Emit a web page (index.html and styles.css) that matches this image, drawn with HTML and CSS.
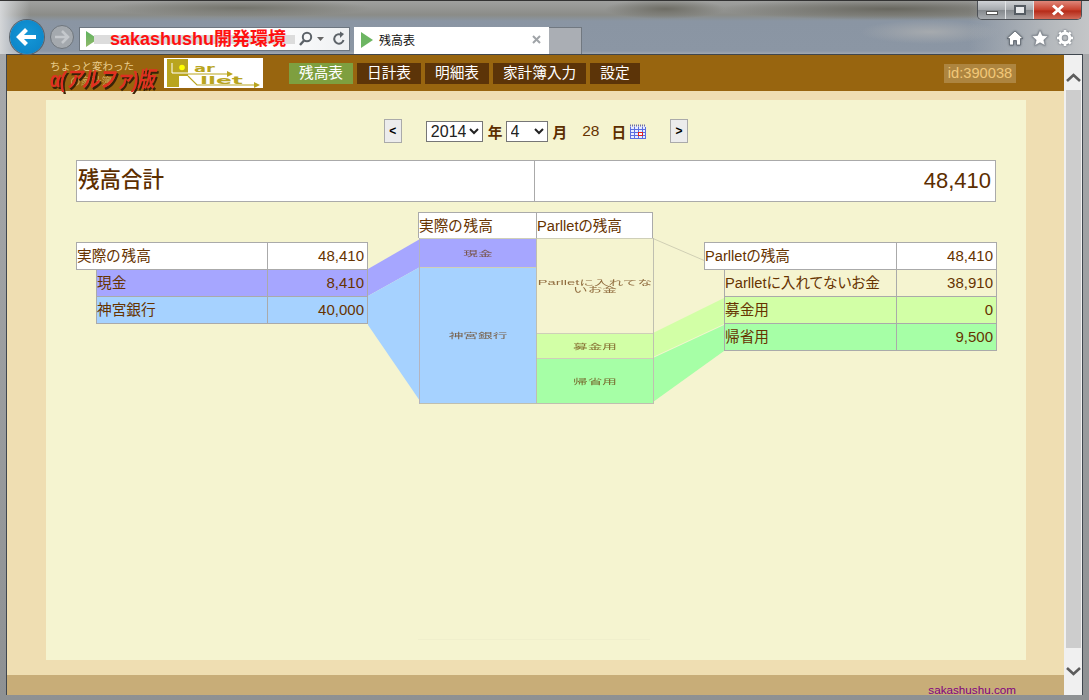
FILE: index.html
```html
<!DOCTYPE html>
<html lang="ja">
<head>
    <meta charset="UTF-8">
    <meta name="viewport" content="width=device-width, initial-scale=1.0">
    <title>残高表</title>
    <link rel="stylesheet" href="styles.css">
</head>
<body>
<div class="window">
    <div class="winbtns">
        <div class="winbtn winbtn-min"><span class="min-bar"></span></div>
        <div class="winbtn winbtn-max"><span class="max-box"></span></div>
        <div class="winbtn winbtn-close">
            <svg width="16" height="12" viewBox="0 0 16 12"><path d="M3 1.500 13 10.500M13 1.500 3 10.500" stroke="#fff" stroke-width="3"/></svg>
        </div>
    </div>

    <div class="chrome">
        <div class="back">
            <svg width="34" height="34" viewBox="0 0 34 34"><path d="M26 17H10M16.500 9.500 9 17l7.500 7.500" fill="none" stroke="#fff" stroke-width="4.200"/></svg>
        </div>
        <div class="forward">
            <svg width="22" height="22" viewBox="0 0 22 22"><path d="M4 11h13M11 5l6 6-6 6" fill="none" stroke="#c4c8cc" stroke-width="2.600"/></svg>
        </div>
        <div class="address">
            <svg class="play" width="12" height="16" viewBox="0 0 12 16"><path d="M0 0 12 8 0 16Z" fill="url(#playfill)"/><defs><linearGradient id="playfill" x1="0" y1="0" x2="0" y2="1"><stop offset="0" stop-color="#5fb35f"/><stop offset="1" stop-color="#8fb86a"/></linearGradient></defs></svg>
            <span class="address-url">sakashushu開発環境</span>
            <svg class="addr-icon" width="15" height="16" viewBox="0 0 15 16"><circle cx="9" cy="6" r="4.200" fill="none" stroke="#5c6268" stroke-width="2"/><path d="M6 9.500 2 14" stroke="#5c6268" stroke-width="2.400"/></svg>
            <svg class="addr-caret" width="7" height="4" viewBox="0 0 7 4"><path d="M0 0h7L3.500 4Z" fill="#666"/></svg>
            <svg class="addr-icon" width="14" height="16" viewBox="0 0 14 16"><path d="M11.500 9a4.700 4.700 0 1 1-2-5" fill="none" stroke="#5c6268" stroke-width="2"/><path d="M8 0.500v6.500l4-4Z" fill="#5c6268"/></svg>
        </div>
        <div class="tab">
            <svg class="play" width="12" height="16" viewBox="0 0 12 16"><path d="M0 0 12 8 0 16Z" fill="#6cb562"/></svg>
            <span class="tab-title">残高表</span>
            <svg class="tab-close" width="9" height="9" viewBox="0 0 9 9"><path d="M1 1 8 8M8 1 1 8" stroke="#a0a4a8" stroke-width="2"/></svg>
        </div>
        <div class="tab-new"></div>
        <div class="tools">
            <svg width="18" height="18" viewBox="0 0 18 18"><path d="M9 2 1 9.500h2.500V16h4v-4.500h3V16h4V9.500H17Z" fill="#fff" stroke="#59616a" stroke-width=".8"/></svg>
            <svg width="18" height="18" viewBox="0 0 18 18"><path d="M9 1l2.400 5.400 5.800.6-4.400 3.900 1.300 5.700L9 13.700l-5.100 2.900 1.300-5.700L.8 7l5.800-.6Z" fill="#fff" stroke="#7a828a" stroke-width=".6"/></svg>
            <svg width="18" height="18" viewBox="0 0 18 18"><circle cx="9" cy="9" r="4.800" fill="none" stroke="#fff" stroke-width="3.200"/><path d="M9 1v3M9 14v3M1 9h3M14 9h3M3.300 3.300l2.200 2.200M12.500 12.500l2.200 2.200M14.700 3.300l-2.200 2.200M5.500 12.500l-2.200 2.200" stroke="#fff" stroke-width="2.600"/></svg>
        </div>
    </div>

    <div class="viewport">
        <div class="page">
            <header class="site-header">
                <div class="logo-alpha">
                    <span class="logo-sub">ちょっと変わった</span>
                    <span class="logo-sub logo-sub2">の家計簿</span>
                    <span class="logo-main">α(アルファ)版</span>
                </div>
                <div class="logo-parllet">
                    <svg width="99" height="30" viewBox="0 0 99 30">
                        <path d="M3 1H24V18H15V29H3Z" fill="#b9a51f"/>
                        <path d="M8 5v10h16" fill="none" stroke="#fff" stroke-width="1"/>
                        <circle cx="18" cy="9.500" r="2.800" fill="#ff0"/>
                        <path d="M24 16H64M24 18 33 27H91" fill="none" stroke="#b9a51f" stroke-width="1.200"/>
                        <path d="M63 13l6 3-6 3ZM90 24l6 3-6 3Z" fill="#b9a51f"/>
                        <text class="parllet-text" x="30" y="14" textLength="21" lengthAdjust="spacingAndGlyphs">ar</text>
                        <text class="parllet-text" x="36" y="25.500" textLength="43" lengthAdjust="spacingAndGlyphs">llet</text>
                    </svg>
                </div>
                <nav class="site-nav">
                    <a class="nav-item nav-active">残高表</a>
                    <a class="nav-item">日計表</a>
                    <a class="nav-item">明細表</a>
                    <a class="nav-item">家計簿入力</a>
                    <a class="nav-item">設定</a>
                </nav>
                <div class="user-id">id:390038</div>
            </header>

            <main class="site-main">
                <div class="panel">
                    <div class="date-nav">
                        <button class="date-btn">&lt;</button>
                        <select class="sel sel-year"><option>2014</option></select>
                        <b class="date-unit date-year">年</b>
                        <select class="sel sel-month"><option>4</option></select>
                        <b class="date-unit date-month">月</b>
                        <span class="date-day">28</span>
                        <b class="date-unit date-hi">日</b>
                        <svg class="cal" width="16" height="15" viewBox="0 0 16 15">
                            <rect x="0" y="2" width="16" height="13" fill="#e8ecff"/>
                            <path d="M0 1.500h16" stroke="#6a6aa8" stroke-width="2" stroke-dasharray="1 1"/>
                            <path d="M.5 3v12M4.500 3v12M8.500 3v12M12.500 3v12M15.500 3v12M0 5.500h16M0 8.500h16M0 11.500h16M0 14.500h16" stroke="#5a6ee0" stroke-width="1"/>
                            <rect x="8.500" y="8.500" width="4" height="3" fill="#fff" stroke="#e02020"/>
                        </svg>
                        <button class="date-btn date-next">&gt;</button>
                    </div>

                    <div class="total">
                        <div class="total-label">残高合計</div>
                        <div class="total-value">48,410</div>
                    </div>

                    <section class="balance">
                        <svg class="flows" width="921" height="430" viewBox="76 212 921 430">
                            <polygon points="368,269 420,239 420,267 368,296" fill="#a6a6ff"/>
                            <polygon points="368,296 420,267 420,401 368,325" fill="#a6d2ff"/>
                            <line x1="653" y1="238.500" x2="724" y2="269" stroke="#d0cfb4"/>
                            <polygon points="653,333 724,298 724,324 653,357" fill="#d2ffa6"/>
                            <polygon points="653,358 724,325 724,351 653,402" fill="#a6ffa6"/>
                            <line x1="418" y1="639.500" x2="650" y2="639.500" stroke="#f0efcc"/>
                        </svg>

                        <div class="acct acct-left">
                            <div class="acct-row acct-head"><span class="acct-name">実際の 残高</span><span class="acct-val">48,410</span></div>
                            <div class="acct-row acct-child c-cash"><span class="acct-name">現金</span><span class="acct-val">8,410</span></div>
                            <div class="acct-row acct-child c-bank"><span class="acct-name">神宮銀行</span><span class="acct-val">40,000</span></div>
                        </div>

                        <div class="stack">
                            <div class="stack-head">
                                <div class="stack-title">実際の 残高</div>
                                <div class="stack-title">Parlletの残高</div>
                            </div>
                            <div class="stack-body">
                                <div class="stack-col">
                                    <div class="bar c-cash bar-cash"><span class="bar-text">現金</span></div>
                                    <div class="bar c-bank bar-bank"><span class="bar-text">神宮銀行</span></div>
                                </div>
                                <div class="stack-col">
                                    <div class="bar bar-none"><span class="bar-text">Parlletに入れてないお金</span></div>
                                    <div class="bar c-fund bar-fund"><span class="bar-text">募金用</span></div>
                                    <div class="bar c-home bar-home"><span class="bar-text">帰省用</span></div>
                                </div>
                            </div>
                        </div>

                        <div class="acct">
                            <div class="acct-row acct-head"><span class="acct-name">Parlletの残高</span><span class="acct-val">48,410</span></div>
                            <div class="acct-row acct-child"><span class="acct-name">Parlletに入れてないお金</span><span class="acct-val">38,910</span></div>
                            <div class="acct-row acct-child c-fund"><span class="acct-name">募金用</span><span class="acct-val">0</span></div>
                            <div class="acct-row acct-child c-home"><span class="acct-name">帰省用</span><span class="acct-val">9,500</span></div>
                        </div>
                    </section>
                </div>
            </main>

            <footer class="site-footer"><a class="footer-link">sakashushu.com</a></footer>
        </div>

        <div class="scrollbar">
            <svg class="scroll-arrow" width="17" height="10" viewBox="0 0 17 10"><path d="M2 8 8.500 2 15 8" fill="none" stroke="#5c5c5c" stroke-width="2.600"/></svg>
            <div class="scroll-thumb"></div>
            <svg class="scroll-arrow scroll-down" width="17" height="10" viewBox="0 0 17 10"><path d="M2 2 8.500 8 15 2" fill="none" stroke="#5c5c5c" stroke-width="2.600"/></svg>
        </div>
    </div>
</div>
</body>
</html>
```

FILE: styles.css
```css
* {
    box-sizing: border-box;
}

html, body {
    margin: 0;
    padding: 0;
    overflow: hidden;
}

body {
    font-family: "Liberation Sans", "Noto Sans CJK JP", sans-serif;
    font-size: 14.67px;
    color: #663300;
}

/* browser frame */
.window {
    position: relative;
    width: 1089px;
    height: 700px;
    background: linear-gradient(#a9abad, #8e9193);
    border-top: 1px solid #333;
    overflow: hidden;
}

.chrome {
    display: flex;
    align-items: flex-start;
    height: 53px;
    padding-top: 19px;
    background:
        linear-gradient(to right, #d4d6d8 0, rgba(212, 214, 216, 0) 30px),
        linear-gradient(to left, #c4c6c8 0, #b4b8bc 40px, rgba(180, 184, 188, 0) 120px),
        radial-gradient(ellipse 70px 12px at 930px 31px, #a6aaae, rgba(166, 170, 174, 0)),
        radial-gradient(ellipse 170px 11px at 890px 8px, #68675f, rgba(104, 103, 95, 0)),
        radial-gradient(ellipse 60px 10px at 665px 8px, #6e6d65, rgba(110, 109, 101, 0)),
        radial-gradient(ellipse 130px 9px at 240px 7px, #74746c, rgba(116, 116, 108, 0)),
        linear-gradient(#a0a19f 0, #8b8c88 14px, #8a95a3 20px, #8b96a4 50px, #a3a9b0 53px);
}

.winbtns {
    position: absolute;
    top: 0;
    right: 7px;
    display: flex;
    height: 19px;
    border: 1px solid #4c5056;
    border-top: none;
    border-radius: 0 0 5px 5px;
    overflow: hidden;
}

.winbtn {
    display: flex;
    align-items: center;
    justify-content: center;
    height: 100%;
    width: 28px;
    background: linear-gradient(#cfd2d5, #a4a8ac 50%, #85898d 52%, #a8acb0);
    border-right: 1px solid #e2e4e6;
}

.winbtn-close {
    width: 47px;
    border-right: none;
    background: linear-gradient(#e0877a, #c8402c 50%, #b52a18 55%, #d26a58);
}

.min-bar {
    width: 12px;
    height: 4px;
    margin-top: 5px;
    background: #fff;
    border: 1px solid #555;
}

.max-box {
    width: 12px;
    height: 10px;
    background: #e8eaec;
    border: 2px solid #555c63;
}

.back {
    width: 34px;
    height: 34px;
    margin-left: 10px;
    border-radius: 50%;
    background: radial-gradient(circle at 50% 45%, #1598d8, #0a80c4);
    box-shadow: 0 0 0 1px #596068;
}

.forward {
    display: flex;
    align-items: center;
    justify-content: center;
    width: 24px;
    height: 24px;
    margin: 5px 0 0 6px;
    border: 1px solid #6f767d;
    border-radius: 50%;
    background: #a4a9ae;
}

.address {
    display: flex;
    align-items: center;
    width: 271px;
    height: 24px;
    margin: 7px 0 0 5px;
    padding: 0 4px 0 6px;
    background: linear-gradient(to right, #fff 70%, #eef0f2);
    border: 1px solid #6d7680;
}

.play {
    flex: none;
}

.address-url {
    margin-left: -4px;
    padding: 0 9px 0 16px;
    font-size: 18px;
    font-weight: bold;
    line-height: 22px;
    white-space: nowrap;
    color: #ff1010;
    background: linear-gradient(transparent 30%, #dcdcdc 30%, #dcdcdc 72%, transparent 72%);
}

.addr-icon {
    flex: none;
    margin-left: 3px;
}

.addr-caret {
    flex: none;
    margin: 0 5px 0 4px;
}

.tab {
    display: flex;
    align-items: center;
    width: 195px;
    height: 27px;
    margin: 7px 0 0 4px;
    padding: 0 6px 2px 7px;
    background: #fff;
}

.tab-title {
    margin-left: 6px;
    font-size: 12px;
    color: #111;
}

.tab-close {
    margin-left: auto;
    margin-right: 2px;
}

.tab-new {
    width: 33px;
    height: 27px;
    margin-top: 7px;
    background: #aaaeb4;
    border: 1px solid #717880;
    border-left: none;
    border-bottom: none;
}

.tools {
    display: flex;
    gap: 7px;
    margin: 9px 15px 0 auto;
    filter: drop-shadow(0 0 1px #59616a);
}

/* page area */
.viewport {
    display: flex;
    height: 641px;
    margin: 0 6px;
    border: 1px solid #3f464e;
    border-bottom: none;
}

.page {
    flex: none;
    display: flex;
    flex-direction: column;
    width: 1057px;
    overflow: hidden;
    background: #efdeb2;
}

.site-header {
    flex: none;
    display: flex;
    align-items: center;
    height: 36px;
    padding-left: 43px;
    background: #98650f;
}

.logo-alpha {
    position: relative;
    width: 107px;
    height: 32px;
    margin-top: 2px;
    white-space: nowrap;
}

.logo-sub {
    position: absolute;
    top: 0;
    left: 0;
    font-size: 10.500px;
    color: #e9cd8d;
}

.logo-sub2 {
    top: 15px;
    left: 20px;
    opacity: .6;
}

.logo-main {
    position: absolute;
    top: 3px;
    left: 0;
    font-size: 22px;
    font-weight: bold;
    font-style: italic;
    letter-spacing: -1px;
    color: #e03020;
    text-shadow: 2px 2px 0 #3a2208;
    transform: scaleX(.8);
    transform-origin: left center;
}

.logo-parllet {
    width: 99px;
    height: 30px;
    margin-left: 7px;
    background: #fff;
}

.logo-parllet svg {
    display: block;
}

.parllet-text {
    font-family: "DejaVu Sans", sans-serif;
    font-size: 10px;
    font-weight: bold;
    fill: #b9a51f;
}

.site-nav {
    display: flex;
    gap: 4px;
    margin-left: 26px;
}

.nav-item {
    height: 21px;
    padding: 0 10px;
    line-height: 21px;
    color: #fff;
    background: #5c3408;
}

.nav-active {
    background: #7e9f3f;
}

.user-id {
    width: 72px;
    height: 19px;
    margin: 0 48px 0 auto;
    line-height: 19px;
    text-align: center;
    color: #f2c878;
    background: #ad8540;
}

.site-main {
    flex: none;
    height: 584px;
    padding: 9px 38px 15px 39px;
}

.panel {
    height: 560px;
    padding: 19px 30px 0;
    background: #f5f4d0;
}

.date-nav {
    display: flex;
    align-items: center;
    justify-content: center;
    height: 24px;
}

.date-btn {
    width: 18px;
    height: 24px;
    padding: 0;
    font-family: "Liberation Sans", sans-serif;
    font-size: 12px;
    font-weight: bold;
    color: #000;
    background: #ececec;
    border: 1px solid #aaa;
}

.sel {
    height: 21px;
    padding: 0;
    font-family: "Liberation Sans", sans-serif;
    font-size: 16px;
    color: #222;
    background: #fff;
    border: 1px solid #767676;
}

.sel-year {
    width: 57px;
    margin-left: 24px;
}

.sel-month {
    width: 42px;
    margin-left: 3px;
}

.date-unit {
    font-weight: bold;
    color: #5c2e00;
}

.date-year,
.date-month {
    margin-left: 5px;
}

.date-day {
    margin-left: 15px;
    font-size: 15.500px;
}

.date-hi {
    margin-left: 12px;
}

.cal {
    margin-left: 4px;
}

.date-next {
    margin-left: 24px;
}

.total {
    display: grid;
    grid-template-columns: 458px 1fr;
    height: 42px;
    margin-top: 17px;
    background: #fff;
    border: 1px solid #aaa;
    color: #5c2e00;
}

.total-label {
    padding-left: 1px;
    font-size: 21.500px;
    font-weight: 500;
    line-height: 38px;
    border-right: 1px solid #aaa;
}

.total-value {
    padding-right: 4px;
    font-size: 22px;
    line-height: 40px;
    text-align: right;
}

/* balance diagram */
.balance {
    position: relative;
    display: flex;
    align-items: flex-start;
    justify-content: space-between;
    width: 921px;
    margin-top: 10px;
}

.flows {
    position: absolute;
    top: 0;
    left: 0;
}

.acct {
    position: relative;
    width: 293px;
    margin-top: 30px;
}

.acct-left {
    width: 292px;
}

.acct-row {
    display: grid;
    grid-template-columns: 1fr 99px;
    height: 28px;
    margin-top: -1px;
    border: 1px solid #aaa;
    line-height: 26px;
}

.acct-row:first-child {
    margin-top: 0;
}

.acct-head {
    background: #fff;
}

.acct-child {
    margin-left: 20px;
}

.acct-name {
    white-space: nowrap;
    border-right: 1px solid #aaa;
    font-feature-settings: "palt";
    word-spacing: -3px;
}

.acct-val {
    padding-right: 3px;
    font-size: 15px;
    text-align: right;
}

.c-cash {
    background: #a6a6ff;
}

.c-bank {
    background: #a6d2ff;
}

.c-fund {
    background: #d2ffa6;
}

.c-home {
    background: #a6ffa6;
}

.stack {
    position: relative;
    width: 235px;
    margin-left: -1px;
}

.stack-head {
    display: grid;
    grid-template-columns: 117px 116px;
    height: 26px;
    background: #fff;
    border: 1px solid #aaa;
    border-bottom: none;
}

.stack-title {
    line-height: 26px;
    white-space: nowrap;
    font-feature-settings: "palt";
    word-spacing: -3px;
}

.stack-title + .stack-title {
    border-left: 1px solid #aaa;
}

.stack-body {
    display: grid;
    grid-template-columns: 117px 117px;
    width: 235px;
    height: 166px;
    margin-left: 1px;
    border-left: 1px solid #b4b4c0;
}

.stack-col {
    display: flex;
    flex-direction: column;
    border-right: 1px solid #bfbfb0;
    border-bottom: 1px solid #bfbfb0;
}

.bar {
    display: flex;
    align-items: center;
    justify-content: center;
    text-align: center;
    border-top: 1px solid #cfcfb8;
}

.bar-cash {
    height: 29px;
}

.bar-bank {
    flex: 1;
}

.bar-none {
    height: 95px;
}

.bar-fund {
    height: 25px;
}

.bar-home {
    flex: 1;
}

.bar-text {
    display: block;
    line-height: 15px;
    opacity: .7;
    transform: scaleY(.5);
}

.site-footer {
    flex: none;
    height: 20px;
    padding: 8px 48px 0 0;
    overflow: hidden;
    font-size: 11.700px;
    text-align: right;
    background: #c8ad78;
}

.footer-link {
    color: #800080;
    text-decoration: underline;
}

.scrollbar {
    flex: none;
    display: flex;
    flex-direction: column;
    align-items: center;
    width: 18px;
    padding-top: 18px;
    background: #f0f0f0;
}

.scroll-thumb {
    width: 15px;
    height: 558px;
    margin-top: 7px;
    background: #cdcdcd;
}

.scroll-down {
    margin-top: 18px;
}
```
